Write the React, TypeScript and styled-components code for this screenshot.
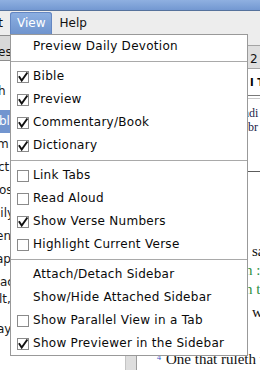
import React from 'react';
import styled, { createGlobalStyle, css } from 'styled-components';

const Global = createGlobalStyle`
  html, body { margin: 0; padding: 0; background: #ffffff; }
  #root { width: 260px; height: 370px; }
`;

const Win = styled.div`
  position: relative;
  width: 260px;
  height: 370px;
  overflow: hidden;
  display: flex;
  flex-direction: column;
  background: #ffffff;
  font-family: "DejaVu Sans", "Noto Sans", sans-serif;
  font-size: 12px;
  color: #111111;
`;

const TitleBar = styled.div`
  flex: none;
  height: 10px;
  background: linear-gradient(#8fb0e0, #7398d1);
  border-bottom: 1px solid #56729c;
`;

const MenuBar = styled.div`
  flex: none;
  height: 24px;
  display: flex;
  align-items: flex-end;
  background: #ededed;
`;

const ClippedTitle = styled.div`
  flex: none;
  width: 10px;
  height: 23px;
  box-sizing: border-box;
  padding-right: 7px;
  overflow: hidden;
  display: flex;
  justify-content: flex-end;
  line-height: 23px;
  white-space: nowrap;
`;

const MenuTitle = styled.div<{ $active?: boolean }>`
  flex: none;
  height: 23px;
  line-height: 23px;
  padding: 0 7px;
  white-space: nowrap;
  color: #111111;
  ${(p) =>
    p.$active &&
    css`
      color: #ffffff;
      border-radius: 3px 3px 0 0;
      background: linear-gradient(#8db0e2, #6e93cd);
      box-shadow: inset 0 0 0 1px #6386c2;
    `}
`;

const Body = styled.div`
  flex: 1;
  display: grid;
  grid-template-columns: 125px 12px 1fr;
  min-height: 0;
`;

const LeftPanel = styled.div`
  display: flex;
  flex-direction: column;
  overflow: hidden;
  background: #ffffff;
`;

const LeftTab = styled.div`
  flex: none;
  height: 15px;
  padding-top: 9px;
  line-height: 14px;
  background: #d8d8d8;
  border-top: 1px solid #8d8d8d;
  border-bottom: 1px solid #8d8d8d;
  white-space: nowrap;
`;

const TreeRow = styled.div<{ $h?: number; $mt?: number; $sel?: boolean }>`
  flex: none;
  height: ${(p) => p.$h ?? 23}px;
  line-height: 23px;
  margin-top: ${(p) => p.$mt ?? 0}px;
  white-space: nowrap;
  color: ${(p) => (p.$sel ? '#ffffff' : '#1a1a1a')};
  background: ${(p) => (p.$sel ? '#7295cf' : 'transparent')};
`;

const Frag = styled.span<{ $shift?: number }>`
  display: inline-block;
  margin-left: ${(p) => p.$shift ?? 0}px;
`;

const Splitter = styled.div`
  background: #dedede;
  border-left: 1px solid #c4c4c4;
  border-right: 1px solid #9c9c9c;
`;

const RightPanel = styled.div`
  display: flex;
  flex-direction: column;
  overflow: hidden;
  background: #ffffff;
`;

const NoteHead = styled.div`
  flex: none;
  height: 10px;
  background: #ededed;
`;

const RightTab = styled.div`
  flex: none;
  height: 16px;
  padding-top: 6px;
  line-height: 14px;
  background: #dfdfdf;
  border-top: 1px solid #a4a4a4;
  border-bottom: 1px solid #a4a4a4;
  white-space: nowrap;
`;

const HeaderRow = styled.div`
  flex: none;
  height: 24px;
  padding-top: 2px;
  line-height: 24px;
  font-weight: bold;
  font-size: 10px;
  color: #000000;
  white-space: nowrap;
`;

const DoubleRule = styled.div`
  flex: none;
  height: 2px;
  border-top: 1px solid #7a7a7a;
  border-bottom: 1px solid #c9c9c9;
`;

const Previewer = styled.div`
  flex: none;
  height: 65px;
  padding-top: 7px;
  font-family: "Liberation Serif", serif;
  font-size: 12px;
  line-height: 14px;
  color: #1b1b48;
  border-bottom: 1px solid #5c5c5c;
`;

const TextPane = styled.div`
  flex: 1;
  font-family: "Liberation Serif", serif;
  font-size: 15px;
  line-height: 17px;
  color: #111111;
`;

const TextLine = styled.div<{ $mt?: number; $indent: number; $green?: boolean }>`
  height: 17px;
  margin-top: ${(p) => p.$mt ?? 0}px;
  padding-left: ${(p) => p.$indent}px;
  white-space: nowrap;
  color: ${(p) => (p.$green ? '#2f8f3f' : '#111111')};
`;

const VerseNum = styled.sup`
  font-size: 8px;
  color: #2d4fc4;
  margin-right: 5px;
  vertical-align: 4px;
  line-height: 0;
`;

const Indented = styled.div<{ $indent: number }>`
  padding-left: ${(p) => p.$indent}px;
  white-space: nowrap;
`;

/* ---------- dropdown menu ---------- */

const Dropdown = styled.div`
  position: absolute;
  left: 10px;
  top: 34px;
  width: 238px;
  box-sizing: border-box;
  border: 1px solid #999999;
  background: #ffffff;
  display: flex;
  flex-direction: column;
  font-family: "DejaVu Sans", "Noto Sans", sans-serif;
  font-size: 12px;
`;

const Item = styled.div`
  height: 23px;
  display: flex;
  align-items: center;
  gap: 4px;
  padding-left: 6px;
  line-height: 23px;
  white-space: nowrap;
  letter-spacing: 0.28px;
  color: #0a0a0a;
`;

const CheckSlot = styled.span<{ $box: boolean }>`
  position: relative;
  flex: none;
  width: 12px;
  height: 12px;
  box-sizing: border-box;
  ${(p) =>
    p.$box &&
    css`
      border: 1px solid #8a8a8a;
      background: #ffffff;
    `}
  svg {
    position: absolute;
    left: -1px;
    top: -1px;
  }
`;

const Separator = styled.div`
  height: 7px;
  display: flex;
  align-items: center;
  &::before {
    content: '';
    flex: 1;
    height: 1px;
    background: #a9a9a9;
  }
`;

type Entry =
  | { kind: 'item'; label: string; check?: boolean }
  | { kind: 'sep' };

const entries: Entry[] = [
  { kind: 'item', label: 'Preview Daily Devotion' },
  { kind: 'sep' },
  { kind: 'item', label: 'Bible', check: true },
  { kind: 'item', label: 'Preview', check: true },
  { kind: 'item', label: 'Commentary/Book', check: true },
  { kind: 'item', label: 'Dictionary', check: true },
  { kind: 'sep' },
  { kind: 'item', label: 'Link Tabs', check: false },
  { kind: 'item', label: 'Read Aloud', check: false },
  { kind: 'item', label: 'Show Verse Numbers', check: true },
  { kind: 'item', label: 'Highlight Current Verse', check: false },
  { kind: 'sep' },
  { kind: 'item', label: 'Attach/Detach Sidebar' },
  { kind: 'item', label: 'Show/Hide Attached Sidebar' },
  { kind: 'item', label: 'Show Parallel View in a Tab', check: false },
  { kind: 'item', label: 'Show Previewer in the Sidebar', check: true },
];

const Tick = () => (
  <svg width="12" height="12" viewBox="0 0 12 12">
    <polyline
      points="1.9,5.3 4.7,9.6 10.4,1.5"
      fill="none"
      stroke="#111111"
      strokeWidth="1.9"
    />
  </svg>
);

const ViewMenu = () => (
  <Dropdown>
    {entries.map((e, i) =>
      e.kind === 'sep' ? (
        <Separator key={i} />
      ) : (
        <Item key={i}>
          <CheckSlot $box={e.check !== undefined}>{e.check && <Tick />}</CheckSlot>
          <span>{e.label}</span>
        </Item>
      )
    )}
  </Dropdown>
);

export default function App() {
  return (
    <>
      <Global />
      <Win>
        <TitleBar />
        <MenuBar>
          <ClippedTitle>Edit</ClippedTitle>
          <MenuTitle $active>View</MenuTitle>
          <MenuTitle>Help</MenuTitle>
        </MenuBar>
        <Body>
          <LeftPanel>
            <LeftTab>
              <Frag $shift={-2}>es</Frag>
            </LeftTab>
            <TreeRow $mt={19}>
              <Frag $shift={-2}>h</Frag>
            </TreeRow>
            <TreeRow $mt={7} $sel>
              <Frag $shift={-1}>bli</Frag>
            </TreeRow>
            <TreeRow>
              <Frag $shift={-3}>m</Frag>
            </TreeRow>
            <TreeRow>
              <Frag $shift={-2}>ct</Frag>
            </TreeRow>
            <TreeRow>
              <Frag $shift={-1}>os</Frag>
            </TreeRow>
            <TreeRow>
              <Frag $shift={-7}>aily</Frag>
            </TreeRow>
            <TreeRow>
              <Frag $shift={-4}>en</Frag>
            </TreeRow>
            <TreeRow>
              <Frag $shift={-4}>ap</Frag>
            </TreeRow>
            <TreeRow $h={17}>
              <Frag>ac</Frag>
            </TreeRow>
            <TreeRow $h={30}>
              <Frag $shift={-1}>lt,</Frag>
            </TreeRow>
            <TreeRow>
              <Frag $shift={-3}>ay</Frag>
            </TreeRow>
          </LeftPanel>
          <Splitter />
          <RightPanel>
            <NoteHead />
            <RightTab>
              <Indented $indent={113}>2</Indented>
            </RightTab>
            <HeaderRow>
              <Indented $indent={113}>I T</Indented>
            </HeaderRow>
            <DoubleRule />
            <Previewer>
              <Indented $indent={106}>ndi</Indented>
              <Indented $indent={111}>br</Indented>
            </Previewer>
            <TextPane>
              <TextLine $mt={71} $indent={115}>saying</TextLine>
              <TextLine $mt={2} $indent={108} $green>n :</TextLine>
              <TextLine $mt={2} $indent={108} $green>n t</TextLine>
              <TextLine $mt={6} $indent={115}>wife</TextLine>
              <TextLine $mt={30} $indent={20}>
                <VerseNum>4</VerseNum>One that ruleth well his own house,
              </TextLine>
              <TextLine $indent={18}>
                <VerseNum>5</VerseNum>(For if a man know not how
              </TextLine>
            </TextPane>
          </RightPanel>
        </Body>
        <ViewMenu />
      </Win>
    </>
  );
}
